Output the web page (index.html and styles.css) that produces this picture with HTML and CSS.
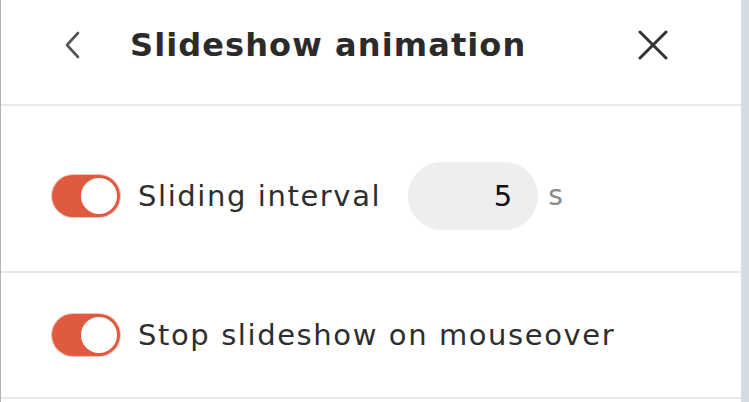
FILE: index.html
```html
<!DOCTYPE html>
<html>
<head>
<meta charset="utf-8">
<link rel="stylesheet" href="styles.css">
</head>
<body>
<div class="frame">
  <div class="panel">
    <div class="header">
      <button class="back" aria-label="Back">
        <svg width="18" height="28" viewBox="0 0 18 28"><path d="M14 2 L3 14 L14 26" fill="none" stroke="#555" stroke-width="2.6" stroke-linecap="round" stroke-linejoin="round"/></svg>
      </button>
      <h1 class="title">Slideshow animation</h1>
      <button class="close" aria-label="Close">
        <svg width="32" height="30" viewBox="0 0 32 30"><path d="M3 2 L29 28 M29 2 L3 28" fill="none" stroke="#333" stroke-width="3" stroke-linecap="round"/></svg>
      </button>
    </div>
    <div class="row row-first">
      <span class="toggle"><span class="knob"></span></span>
      <span class="label">Sliding interval</span>
      <span class="pill">5</span>
      <span class="unit">s</span>
    </div>
    <div class="row row-second">
      <span class="toggle"><span class="knob"></span></span>
      <span class="label">Stop slideshow on mouseover</span>
    </div>
  </div>
  <div class="strip"></div>
</div>
</body>
</html>
```
FILE: styles.css
```css
html, body {
  margin: 0;
  padding: 0;
  background: #ffffff;
}
body {
  font-family: "DejaVu Sans", "Open Sans", sans-serif;
  color: #2e2e2e;
}
.frame {
  display: flex;
  width: 749px;
  height: 402px;
  overflow: hidden;
}
.panel {
  flex: 1;
  border-left: 1px solid #b3b3b3;
  display: flex;
  flex-direction: column;
}
.strip {
  width: 8px;
  background: #d4dce3;
}
.header {
  border-bottom: 2px solid #e9e9e9;
  display: flex;
  align-items: center;
  padding-left: 63px;
  padding-bottom: 14px;
  box-sizing: border-box;
  height: 106px;
}
.back, .close {
  border: 0;
  background: none;
  padding: 0;
  display: flex;
}
.title {
  margin: 0 0 0 48px;
  font-size: 32px;
  font-weight: 700;
  letter-spacing: 1.1px;
  color: #2b2b2b;
}
.close {
  margin-left: auto;
  margin-right: 72px;
}
.row {
  display: flex;
  align-items: center;
  padding-left: 51px;
  border-bottom: 2px solid #e9e9e9;
  box-sizing: border-box;
}
.row-first {
  height: 167px;
  padding-top: 14px;
}
.row-second {
  height: 126px;
}
.toggle {
  width: 68px;
  height: 42px;
  border-radius: 21px;
  background: #e05a40;
  box-shadow: 0 0 0 1px #f0c4b8;
  display: flex;
  align-items: center;
  justify-content: flex-end;
  padding-right: 3px;
  box-sizing: border-box;
}
.knob {
  width: 36px;
  height: 36px;
  border-radius: 50%;
  background: #fff;
}
.label {
  margin-left: 18px;
  font-size: 29px;
  letter-spacing: 1.6px;
  color: #2e2e2e;
}
.pill {
  margin-left: 27px;
  width: 130px;
  height: 68px;
  border-radius: 34px;
  background: #eeeeee;
  display: flex;
  align-items: center;
  justify-content: flex-end;
  padding-right: 26px;
  box-sizing: border-box;
  font-size: 29px;
  color: #111;
}
.unit {
  margin-left: 10px;
  font-size: 28px;
  color: #8a8a8a;
}
```
